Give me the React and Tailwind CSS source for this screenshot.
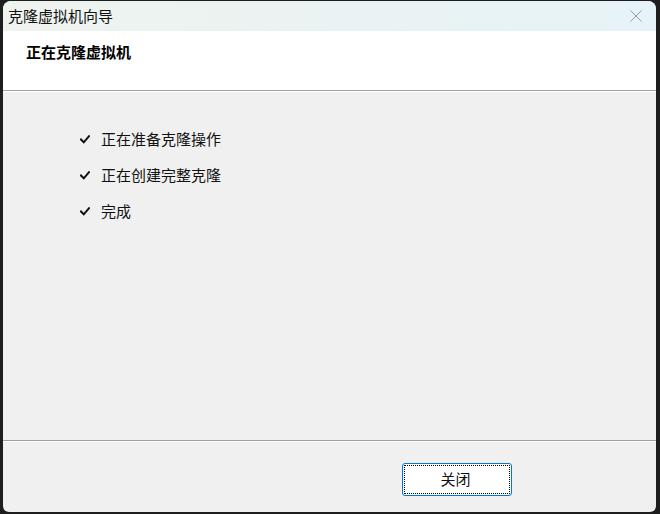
import React from "react";

const Check = () => (
  <svg width="10" height="9" viewBox="0 0 10 9" className="shrink-0">
    <path d="M1 4.5 L3.8 7.3 L9 1.2" fill="none" stroke="#111" strokeWidth="2" strokeLinecap="square" />
  </svg>
);

export default function App() {
  const font = { fontFamily: '"Noto Sans CJK SC", "Noto Sans", sans-serif' };
  const items = ["正在准备克隆操作", "正在创建完整克隆", "完成"];
  return (
    <div className="w-[660px] h-[514px] bg-[#1e1e1e] pt-[1px] pl-[3px] pr-[4px] pb-[2px]" style={font}>
      <div className="w-full h-full rounded-t-[8px] rounded-b-[6px] overflow-hidden flex flex-col bg-[#f0f0f0]">
        <div className="h-[30px] shrink-0 flex items-center justify-between bg-gradient-to-r from-[#eef3ee] via-[#eaf3f3] to-[#e6f3f8] pl-[5px] pr-[14px]">
          <span className="text-[15px] leading-[20px] text-[#111]">克隆虚拟机向导</span>
          <svg width="12" height="12" viewBox="0 0 12 12">
            <path d="M0.5 0.5 L11.5 11.5 M11.5 0.5 L0.5 11.5" stroke="#9a9a9a" strokeWidth="1" />
          </svg>
        </div>
        <div className="h-[59px] shrink-0 bg-white pl-[23px] pt-[8px]">
          <span className="text-[15px] leading-[20px] font-bold text-black">正在克隆虚拟机</span>
        </div>
        <div className="h-[1px] shrink-0 bg-[#a0a0a0]" />
        <div className="h-[1px] shrink-0 bg-white" />
        <div className="h-[348px] shrink-0 flex flex-col gap-[16px] pt-[37px] pl-[77px]">
          {items.map((t) => (
            <div key={t} className="flex items-center h-[20px]">
              <div className="w-[21px] flex"><Check /></div>
              <span className="text-[15px] leading-[20px] text-[#111]">{t}</span>
            </div>
          ))}
        </div>
        <div className="h-[1px] shrink-0 bg-[#a0a0a0]" />
        <div className="h-[1px] shrink-0 bg-white" />
        <div className="flex-1 pt-[21px] pl-[399px]">
          <div className="w-[110px] h-[33px] bg-white border border-[#0078d7] rounded-[3px] p-[1px]">
            <div className="w-full h-full border border-dotted border-black flex items-center justify-center pb-[2px] pr-[3px]">
              <span className="text-[15px] leading-[20px] text-[#111]">关闭</span>
            </div>
          </div>
        </div>
      </div>
    </div>
  );
}
